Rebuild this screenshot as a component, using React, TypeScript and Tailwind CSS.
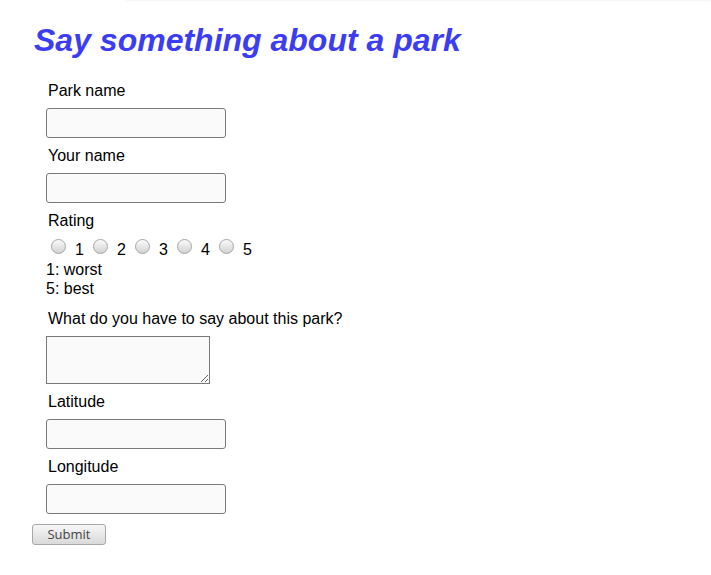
import React from 'react';

const Label = ({ children }: { children: React.ReactNode }) => (
  <label className="block pl-[2px] py-[8px] leading-[19px]">{children}</label>
);

const TextInput = () => (
  <input
    type="text"
    className="block w-[180px] h-[30px] rounded-[3px] border border-[#7a7a7a] bg-[#fafafa] px-1 outline-none"
  />
);

const RatingRow = () => (
  <div className="flex items-start leading-[19px] h-[19px]">
    {[1, 2, 3, 4, 5].map((n) => (
      <div key={n} className="flex items-start">
        <span className="block shrink-0 ml-[5px] -mt-[1px] w-[15px] h-[15px] rounded-full border border-[#a5a5a5] bg-gradient-to-b from-[#fbfbfb] to-[#d2d2d2]" />
        <span className="block ml-[9px] w-[9px]">{n}</span>
        <span className="block w-[4px]" />
      </div>
    ))}
  </div>
);

const App = () => {
  return (
    <div className="min-h-[575px] bg-white text-black font-['Liberation_Sans',Arial,sans-serif] text-[16px]">
      <div className="ml-[125px] h-[1px] bg-[#f6f6f6] shadow-[0_1px_3px_rgba(0,0,0,0.05)]" />
      <div className="pl-8">
        <h1 className="pt-[21px] pl-[2px] mb-[14px] text-[32px] leading-[37px] font-bold italic text-[#3c3cf2]">
          Say something about a park
        </h1>

        <form className="pl-[14px]" onSubmit={(e) => e.preventDefault()}>
          <Label>Park name</Label>
          <TextInput />
          <Label>Your name</Label>
          <TextInput />
          <Label>Rating</Label>
          <div className="mt-[2px]">
            <RatingRow />
          </div>
          <div className="leading-[18.5px] mt-[2px]">
            <div>1: worst</div>
            <div>5: best</div>
          </div>
          <div className="mt-[3px]">
            <Label>What do you have to say about this park?</Label>
          </div>
          <textarea className="block w-[164px] h-[48px] border border-[#7a7a7a] bg-[#fafafa] resize" />
          <Label>Latitude</Label>
          <TextInput />
          <Label>Longitude</Label>
          <TextInput />
        </form>

        <button
          type="submit"
          className="mt-[10px] w-[74px] h-[21px] rounded-[3px] border border-[#a8a8a8] bg-gradient-to-b from-[#f7f7f7] to-[#d9d9d9] text-[13px] leading-[19px] text-[#444] font-['Open_Sans',sans-serif]"
        >
          Submit
        </button>
      </div>
    </div>
  );
};

export default App;
